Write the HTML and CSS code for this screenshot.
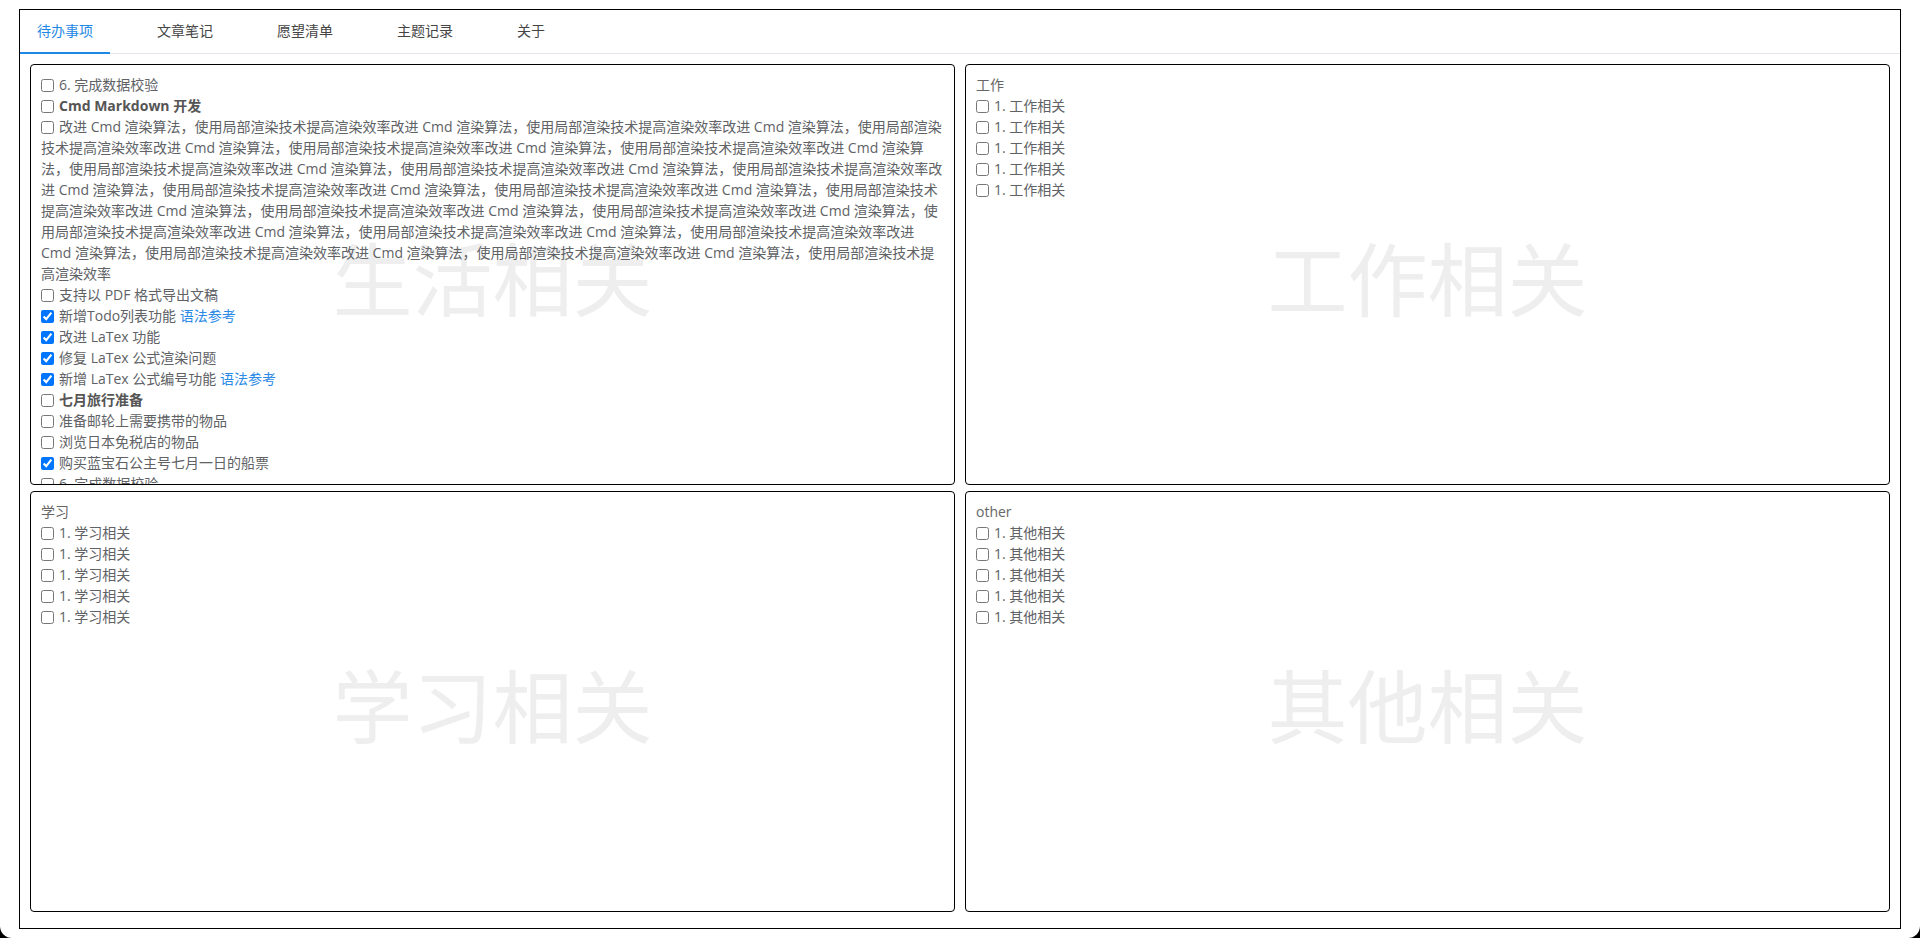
FILE: index.html
```html
<!DOCTYPE html>
<html lang="zh-CN">
<head>
<meta charset="utf-8">
<title>待办事项</title>
<link rel="stylesheet" href="styles.css">
</head>
<body>
<div class="frame">
  <div class="tabs">
    <div class="tab active">待办事项</div>
    <div class="tab">文章笔记</div>
    <div class="tab">愿望清单</div>
    <div class="tab">主题记录</div>
    <div class="tab">关于</div>
  </div>
  <div class="board">
    <section class="panel">
      <div class="watermark">生活相关</div>
      <div class="content">
        <div class="item"><input type="checkbox" class="cb">6. 完成数据校验</div>
        <div class="item bold"><input type="checkbox" class="cb">Cmd Markdown 开发</div>
        <div class="item"><input type="checkbox" class="cb">改进 Cmd 渲染算法，使用局部渲染技术提高渲染效率改进 Cmd 渲染算法，使用局部渲染技术提高渲染效率改进 Cmd 渲染算法，使用局部渲染技术提高渲染效率改进 Cmd 渲染算法，使用局部渲染技术提高渲染效率改进 Cmd 渲染算法，使用局部渲染技术提高渲染效率改进 Cmd 渲染算法，使用局部渲染技术提高渲染效率改进 Cmd 渲染算法，使用局部渲染技术提高渲染效率改进 Cmd 渲染算法，使用局部渲染技术提高渲染效率改进 Cmd 渲染算法，使用局部渲染技术提高渲染效率改进 Cmd 渲染算法，使用局部渲染技术提高渲染效率改进 Cmd 渲染算法，使用局部渲染技术提高渲染效率改进 Cmd 渲染算法，使用局部渲染技术提高渲染效率改进 Cmd 渲染算法，使用局部渲染技术提高渲染效率改进 Cmd 渲染算法，使用局部渲染技术提高渲染效率改进 Cmd 渲染算法，使用局部渲染技术提高渲染效率改进 Cmd 渲染算法，使用局部渲染技术提高渲染效率改进 Cmd 渲染算法，使用局部渲染技术提高渲染效率改进 Cmd 渲染算法，使用局部渲染技术提高渲染效率改进 Cmd 渲染算法，使用局部渲染技术提高渲染效率</div>
        <div class="item"><input type="checkbox" class="cb">支持以 PDF 格式导出文稿</div>
        <div class="item"><input type="checkbox" class="cb" checked>新增Todo列表功能 <a class="link">语法参考</a></div>
        <div class="item"><input type="checkbox" class="cb" checked>改进 LaTex 功能</div>
        <div class="item"><input type="checkbox" class="cb" checked>修复 LaTex 公式渲染问题</div>
        <div class="item"><input type="checkbox" class="cb" checked>新增 LaTex 公式编号功能 <a class="link">语法参考</a></div>
        <div class="item bold"><input type="checkbox" class="cb">七月旅行准备</div>
        <div class="item"><input type="checkbox" class="cb">准备邮轮上需要携带的物品</div>
        <div class="item"><input type="checkbox" class="cb">浏览日本免税店的物品</div>
        <div class="item"><input type="checkbox" class="cb" checked>购买蓝宝石公主号七月一日的船票</div>
        <div class="item"><input type="checkbox" class="cb">6. 完成数据校验</div>
      </div>
    </section>
    <section class="panel">
      <div class="watermark">工作相关</div>
      <div class="content">
        <div class="title">工作</div>
        <div class="item"><input type="checkbox" class="cb">1. 工作相关</div>
        <div class="item"><input type="checkbox" class="cb">1. 工作相关</div>
        <div class="item"><input type="checkbox" class="cb">1. 工作相关</div>
        <div class="item"><input type="checkbox" class="cb">1. 工作相关</div>
        <div class="item"><input type="checkbox" class="cb">1. 工作相关</div>
      </div>
    </section>
    <section class="panel">
      <div class="watermark">学习相关</div>
      <div class="content">
        <div class="title">学习</div>
        <div class="item"><input type="checkbox" class="cb">1. 学习相关</div>
        <div class="item"><input type="checkbox" class="cb">1. 学习相关</div>
        <div class="item"><input type="checkbox" class="cb">1. 学习相关</div>
        <div class="item"><input type="checkbox" class="cb">1. 学习相关</div>
        <div class="item"><input type="checkbox" class="cb">1. 学习相关</div>
      </div>
    </section>
    <section class="panel">
      <div class="watermark">其他相关</div>
      <div class="content">
        <div class="title">other</div>
        <div class="item"><input type="checkbox" class="cb">1. 其他相关</div>
        <div class="item"><input type="checkbox" class="cb">1. 其他相关</div>
        <div class="item"><input type="checkbox" class="cb">1. 其他相关</div>
        <div class="item"><input type="checkbox" class="cb">1. 其他相关</div>
        <div class="item"><input type="checkbox" class="cb">1. 其他相关</div>
      </div>
    </section>
  </div>
</div>
</body>
</html>
```
FILE: styles.css
```css
html {
  background: #000;
  height: 938px;
  overflow: hidden;
}
body {
  margin: 0;
  height: 938px;
  box-sizing: border-box;
  padding: 9px 19px;
  background: #fff;
  border-radius: 0 0 12px 12px;
  font-family: "Open Sans", "Noto Sans CJK SC", sans-serif;
  font-size: 14px;
  color: #606266;
  overflow: hidden;
}
.frame {
  height: 920px;
  box-sizing: border-box;
  border: 1px solid #000;
  display: flex;
  flex-direction: column;
}
.tabs {
  display: flex;
  height: 44px;
  box-sizing: border-box;
  border-bottom: 1px solid #e4e7ed;
  flex: none;
}
.tab {
  height: 44px;
  box-sizing: border-box;
  padding: 0 17px;
  margin-right: 30px;
  line-height: 42px;
  border-bottom: 2px solid transparent;
  color: #444;
  font-size: 14px;
}
.tab.active {
  color: #1e88e5;
  border-bottom-color: #1e88e5;
}
.board {
  flex: 1;
  min-height: 0;
  padding: 10px 10px 16px 10px;
  display: grid;
  grid-template-columns: 1fr 1fr;
  grid-template-rows: 1fr 1fr;
  column-gap: 10px;
  row-gap: 6px;
}
.panel {
  position: relative;
  border: 1px solid #000;
  border-radius: 4px;
  overflow: hidden;
  min-height: 0;
}
.watermark {
  position: absolute;
  inset: 0;
  display: flex;
  align-items: center;
  justify-content: center;
  font-family: "Noto Sans CJK SC", sans-serif;
  font-size: 80px;
  color: #eeeeee;
  pointer-events: none;
  user-select: none;
}
.content {
  position: relative;
  padding: 9px 9px 10px 10px;
  line-height: 21px;
}
.title {
  color: #666;
}
.item {
  color: #606266;
}
.item.bold {
  font-weight: bold;
  color: #555;
}
.cb {
  width: 13px;
  height: 13px;
  margin: 0 5px 0 0;
  vertical-align: -2px;
}
.link {
  color: #2b8ae6;
  text-decoration: none;
}
```
